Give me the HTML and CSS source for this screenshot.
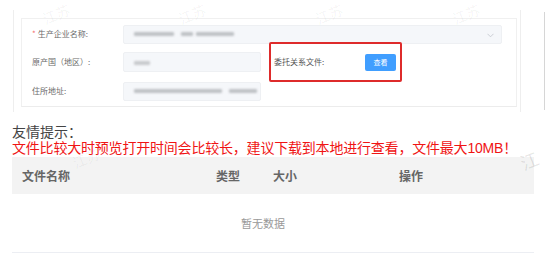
FILE: index.html
```html
<!DOCTYPE html>
<html lang="zh-CN">
<head>
<meta charset="utf-8">
<link rel="stylesheet" href="styles.css">
</head>
<body>
<div class="top">
  <div class="panel">
    <div class="card">
      <div class="row row1">
        <div class="label"><span class="req">*</span>生产企业名称:</div>
        <div class="input wide">
          <span class="blur b1"></span><span class="blur b1b"></span><span class="blur b1c"></span>
          <svg class="chev" width="7" height="5" viewBox="0 0 7 5"><path d="M0.5 0.8 L3.5 3.8 L6.5 0.8" fill="none" stroke="#c0c4cc" stroke-width="0.8"/></svg>
        </div>
      </div>
      <div class="row row2">
        <div class="label">原产国（地区）:</div>
        <div class="input narrow"><span class="blur b2"></span></div>
        <div class="mark">
          <span class="mlabel">委托关系文件:</span>
          <span class="btn">查看</span>
        </div>
      </div>
      <div class="row row3">
        <div class="label">住所地址:</div>
        <div class="input narrow"><span class="blur b3"></span><span class="blur b3b"></span></div>
      </div>
    </div>
  </div>
  <div class="vline"></div>
</div>
<div class="tips">
  <div class="tip-title">友情提示：</div>
  <div class="tip-red">文件比较大时预览打开时间会比较长，建议下载到本地进行查看，文件最大10MB！</div>
</div>
<div class="table">
  <div class="thead">
    <div class="c1">文件名称</div>
    <div class="c2">类型</div>
    <div class="c3">大小</div>
    <div class="c4">操作</div>
  </div>
  <div class="empty">暂无数据</div>
</div>
<div class="wm w1">江苏</div>
<div class="wm w2">江苏</div>
<div class="wm w3">江苏</div>
<div class="wm w4">江苏</div>
<div class="wm w5">江苏</div>
<div class="wm w6">江</div>
</body>
</html>
```
FILE: styles.css
```css
* { box-sizing: border-box; }
html, body { margin: 0; padding: 0; background: #fff; }
body {
  width: 546px; height: 254px; overflow: hidden; position: relative;
  font-family: "Noto Sans CJK SC", "Noto Sans", sans-serif;
}
.top { display: flex; height: 112px; padding-left: 13px; }
.panel {
  width: 508px; height: 102px; margin-top: 10px;
  border-left: 1px solid #eeeeee; border-right: 1px solid #eeeeee;
  padding: 8px 3px 0 7px;
}
.card {
  height: 89px; border: 1px solid #f0f0f0; border-bottom-color: #ececec;
  padding-top: 1px;
}
.vline { width: 1px; background: #d6d6d6; margin: 12px 0 2px 23px; }
.row { display: flex; align-items: center; padding-left: 10px; }
.row1 { height: 28px; }
.row2 { height: 28px; }
.row3 { height: 30px; }
.label {
  width: 91px; font-size: 8px; line-height: 10px; color: #6b6b6b; white-space: nowrap;
}
.req { color: #f56c6c; margin-right: 2px; }
.input {
  position: relative; background: #f5f7fa; border: 1px solid #eef0f3; border-radius: 2px;
  display: flex; align-items: center; padding-left: 10px; gap: 3px;
}
.wide { width: 379px; height: 19px; }
.narrow { width: 138px; height: 20px; }
.row3 .narrow { height: 19px; }
.chev { position: absolute; right: 7px; top: 7px; }
.blur { display: inline-block; height: 4px; background: #bfc2c6; filter: blur(0.8px); border-radius: 1px; }
.b1 { width: 40px; } .b1b { width: 12px; margin-left: 4px; } .b1c { width: 38px; }
.b2 { width: 16px; background: #c8cacd; margin-top: 2px; }
.b3 { width: 88px; } .b3b { width: 28px; margin-left: 4px; }
.mark {
  position: relative; z-index: 2;
  margin-left: 8px; width: 133px; height: 40px; flex: none;
  border: 2px solid #de2b2b; border-radius: 2px;
  display: flex; align-items: center; justify-content: space-between;
  padding: 0 4px 0 3px;
}
.mlabel { font-size: 8px; color: #555; line-height: 10px; }
.btn {
  width: 31px; height: 17px; background: #409eff; color: #fff; border-radius: 2px;
  font-size: 7px; line-height: 17px; text-align: center;
}
.tips {
  padding: 12px 0 0 12px; font-size: 14px; line-height: 16px;
  font-family: "Liberation Sans", "Noto Sans CJK SC", sans-serif;
}
.tip-title { color: #444; }
.tip-red { color: #f01414; white-space: nowrap; letter-spacing: -0.2px; }
.table { margin: 1px 0 0 12px; width: 522px; border-bottom: 1px solid #eceef3; }
.thead {
  display: flex; height: 37px; align-items: center; background: #f3f3f3;
  font-size: 12px; font-weight: bold; color: #666;
}
.thead div { padding-left: 10px; }
.c1 { width: 194px; }
.c2 { width: 57px; }
.c3 { width: 126px; }
.c4 { flex: 1; }
.empty {
  height: 58px; display: flex; align-items: center; justify-content: center;
  font-size: 11px; color: #999; padding-right: 20px;
}
.wm {
  position: absolute; font-size: 14px; color: rgba(0,0,0,0.05);
  transform: rotate(-22deg); pointer-events: none; line-height: 16px;
}
.w1 { left: 42px; top: 6px; }
.w2 { left: 178px; top: 6px; }
.w3 { left: 315px; top: 6px; }
.w4 { left: 452px; top: 6px; }
.w5 { left: 72px; top: 150px; }
.w6 { left: 520px; top: 152px; color: rgba(0,0,0,0.1); font-size: 18px; }
```
